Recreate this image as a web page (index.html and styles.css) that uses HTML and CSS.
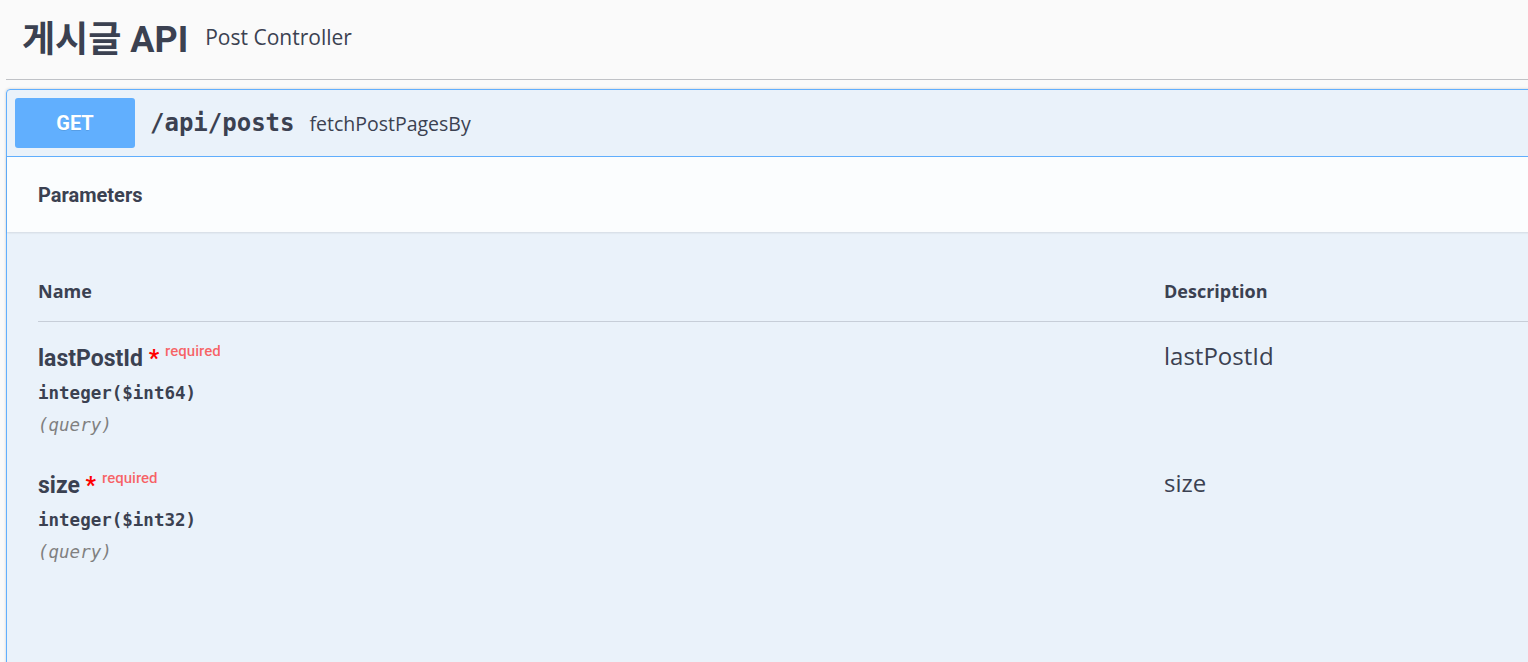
FILE: index.html
```html
<!DOCTYPE html>
<html lang="ko">
<head>
<meta charset="utf-8">
<title>게시글 API</title>
<link rel="stylesheet" href="styles.css">
</head>
<body>
<div class="page">
  <h3 class="tag">
    <span class="tag-name">게시글 API</span>
    <small class="tag-desc">Post Controller</small>
  </h3>
  <div class="opblock">
    <div class="summary">
      <span class="method">GET</span>
      <span class="path">/api/posts</span>
      <span class="summary-desc">fetchPostPagesBy</span>
    </div>
    <div class="section-header">
      <h4 class="section-title">Parameters</h4>
    </div>
    <div class="table-container">
      <div class="params">
        <div class="th">Name</div>
        <div class="th">Description</div>
        <div class="rule"></div>

        <div class="cell-name">
          <div class="pname">lastPostId<span class="star">&nbsp;*</span><span class="req">required</span></div>
          <div class="ptype">integer($int64)</div>
          <div class="pin">(query)</div>
        </div>
        <div class="cell-desc">lastPostId</div>

        <div class="cell-name">
          <div class="pname">size<span class="star">&nbsp;*</span><span class="req">required</span></div>
          <div class="ptype">integer($int32)</div>
          <div class="pin">(query)</div>
        </div>
        <div class="cell-desc">size</div>
      </div>
    </div>
  </div>
</div>
</body>
</html>
```

FILE: styles.css
```css
html, body {
  margin: 0;
  padding: 0;
  background: #fafafa;
  overflow: hidden;
}

body {
  font-family: "Open Sans", "Noto Sans CJK KR", sans-serif;
  color: #3b4151;
}

.page {
  width: 1620px;
  padding: 0 0 0 6px;
}

.tag {
  margin: 0 0 9px 0;
  height: 80px;
  box-sizing: border-box;
  border-bottom: 1px solid rgba(59, 65, 81, 0.3);
  display: flex;
  align-items: center;
  padding: 0 0 0 16px;
}

.tag-name {
  font-family: Roboto, "Noto Sans CJK KR", sans-serif;
  font-size: 36px;
  line-height: 36px;
  font-weight: 700;
  color: #3b4151;
}

.tag-desc {
  font-family: "Open Sans", sans-serif;
  font-size: 21px;
  font-weight: 400;
  padding: 0 15px 5px 17px;
  color: #3b4151;
}

.opblock {
  border: 1px solid #61affe;
  border-radius: 4px;
  background: rgba(97, 175, 254, 0.1);
  box-shadow: 0 0 3px rgba(0, 0, 0, 0.19);
  height: 620px;
}

.summary {
  display: flex;
  align-items: center;
  padding: 8px;
  border-bottom: 1px solid #61affe;
}

.method {
  width: 120px;
  height: 50px;
  display: flex;
  align-items: center;
  justify-content: center;
  background: #61affe;
  border-radius: 3px;
  color: #fff;
  font-family: Roboto, sans-serif;
  font-weight: 700;
  font-size: 20px;
  text-shadow: 0 1px 0 rgba(0, 0, 0, 0.1);
}

.path {
  font-family: "DejaVu Sans Mono", monospace;
  font-weight: 700;
  font-size: 24px;
  padding: 0 15px;
  color: #3b4151;
}

.summary-desc {
  font-family: "Open Sans", sans-serif;
  font-size: 19.5px;
  color: #3b4151;
}

.section-header {
  height: 75px;
  display: flex;
  align-items: center;
  padding: 0 31px;
  background: rgba(255, 255, 255, 0.8);
  box-shadow: 0 1px 2px rgba(0, 0, 0, 0.1);
}

.section-title {
  margin: 0;
  font-family: Roboto, sans-serif;
  font-weight: 700;
  font-size: 20px;
  color: #3b4151;
}

.table-container {
  padding: 29px 0 0 31px;
}

.params {
  display: grid;
  grid-template-columns: 1126px 1fr;
}

.th {
  font-family: "Open Sans", sans-serif;
  font-weight: 700;
  font-size: 18px;
  line-height: 24px;
  padding: 18px 0 18px 0;
}

.rule {
  grid-column: 1 / 3;
  height: 1px;
  background: rgba(59, 65, 81, 0.2);
}

.cell-name {
  padding: 19px 0 10px 0;
}

.pname {
  font-family: Roboto, sans-serif;
  font-weight: 700;
  font-size: 23px;
  line-height: 36px;
  color: #3b4151;
}

.star {
  color: #ff0000;
}

.req {
  font-family: Roboto, sans-serif;
  font-weight: 500;
  font-size: 15px;
  line-height: 1;
  color: rgba(255, 0, 0, 0.6);
  padding-left: 6px;
  vertical-align: 10px;
}

.ptype {
  font-family: "DejaVu Sans Mono", monospace;
  font-weight: 700;
  font-size: 17.5px;
  line-height: 21px;
  padding: 5.5px 0 8.5px 0;
  color: #3b4151;
}

.pin {
  font-family: "DejaVu Sans Mono", monospace;
  font-style: italic;
  font-size: 17.5px;
  line-height: 27px;
  color: #808080;
}

.cell-desc {
  padding-top: 16px;
  font-family: "Open Sans", sans-serif;
  font-size: 24px;
  line-height: 36px;
  color: #3b4151;
}
```
